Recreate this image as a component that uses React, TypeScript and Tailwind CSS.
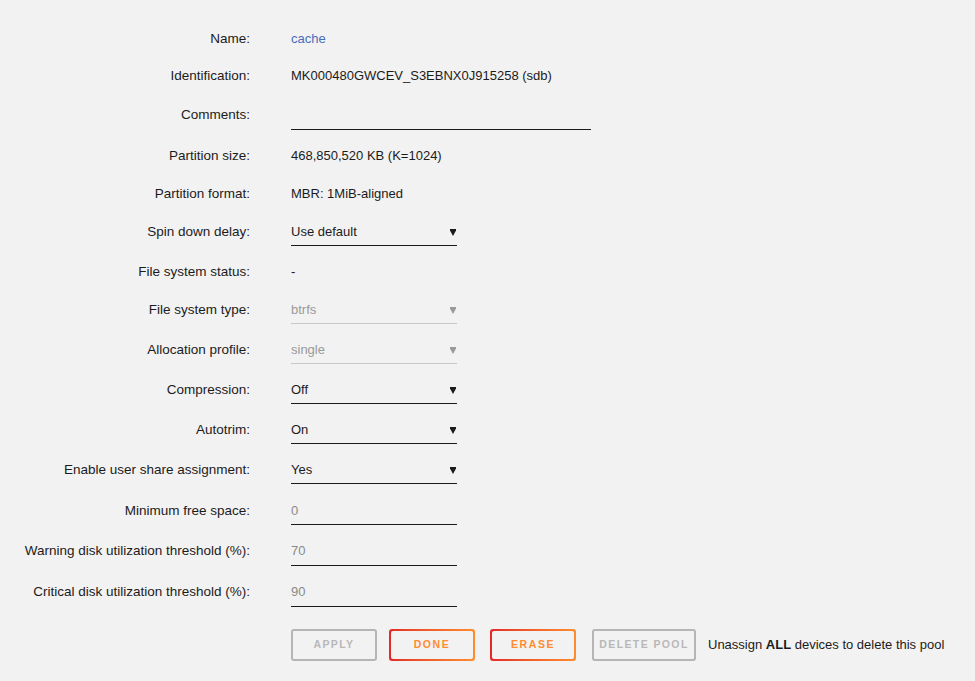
import React from "react";

const font = { fontFamily: '"Liberation Sans", Arial, sans-serif' };

function Arrow({ disabled }: { disabled?: boolean }) {
  return (
    <svg width="6" height="7" viewBox="0 0 6 7" className="absolute right-[1px] top-[11px]">
      <path d="M0 0 H6 V1.5 L3 7 L0 1.5 Z" fill={disabled ? "#9a9a9a" : "#1c1b1b"} />
    </svg>
  );
}

function Label({ children }: { children: React.ReactNode }) {
  return (
    <div className="w-[250px] shrink-0 text-right h-[26px] pt-[1px] leading-[26px] text-[13.5px] text-[#1c1b1b]">
      {children}
    </div>
  );
}

function Select({ value, disabled, h }: { value: string; disabled?: boolean; h: string }) {
  return (
    <div
      className={
        "relative w-[166px] border-b box-border pt-[1px] text-[13px] leading-[26px] " +
        h +
        (disabled ? " border-[#c8c8c8] text-[#9a9a9a]" : " border-[#1c1b1b] text-[#1c1b1b]")
      }
    >
      {value}
      <Arrow disabled={disabled} />
    </div>
  );
}

function Input({ value, w, h }: { value: string; w: string; h: string }) {
  return (
    <div className={"border-b border-[#1c1b1b] box-border pt-[1px] text-[13px] leading-[26px] text-[#8a8a8a] " + w + " " + h}>
      {value}
    </div>
  );
}

function Row({ h, label, children }: { h: string; label: string; children: React.ReactNode }) {
  return (
    <div className={"flex items-start " + h}>
      <Label>{label}</Label>
      <div className="ml-[41px]">{children}</div>
    </div>
  );
}

function Text({ children, className }: { children: React.ReactNode; className?: string }) {
  return <div className={"pt-[1px] text-[13px] leading-[26px] text-[#1c1b1b] " + (className || "")}>{children}</div>;
}

function GrayBtn({ label, w }: { label: string; w: string }) {
  return (
    <div
      className={
        "h-[32px] border-2 border-[#b5b5b5] rounded-[3px] flex items-center justify-center text-[10.5px] font-bold tracking-[1.4px] text-[#b8b8b8] " +
        w
      }
    >
      {label}
    </div>
  );
}

function OrangeBtn({ label }: { label: string }) {
  return (
    <div className="h-[32px] w-[86px] rounded-[3px] p-[2px] bg-gradient-to-r from-[#e22828] to-[#ff8c2f]">
      <div className="h-full w-full rounded-[2px] bg-[#f2f2f2] flex items-center justify-center text-[10.5px] font-bold tracking-[1.6px] text-[#ff8c2f]">
        {label}
      </div>
    </div>
  );
}

export default function App() {
  return (
    <div className="w-[975px] h-[681px] bg-[#f2f2f2] overflow-hidden" style={font}>
      <div className="pt-[25px] flex flex-col">
        <Row h="h-[37px]" label="Name:">
          <Text className="!text-[#486dba]">cache</Text>
        </Row>
        <Row h="h-[39px]" label="Identification:">
          <Text>MK000480GWCEV_S3EBNX0J915258 (sdb)</Text>
        </Row>
        <Row h="h-[41px]" label="Comments:">
          <Input value="" w="w-[300px]" h="h-[29px]" />
        </Row>
        <Row h="h-[38px]" label="Partition size:">
          <Text>468,850,520 KB (K=1024)</Text>
        </Row>
        <Row h="h-[38px]" label="Partition format:">
          <Text>MBR: 1MiB-aligned</Text>
        </Row>
        <Row h="h-[40px]" label="Spin down delay:">
          <Select value="Use default" h="h-[28px]" />
        </Row>
        <Row h="h-[38px]" label="File system status:">
          <Text>-</Text>
        </Row>
        <Row h="h-[40px]" label="File system type:">
          <Select value="btrfs" disabled h="h-[28px]" />
        </Row>
        <Row h="h-[40px]" label="Allocation profile:">
          <Select value="single" disabled h="h-[28px]" />
        </Row>
        <Row h="h-[40px]" label="Compression:">
          <Select value="Off" h="h-[28px]" />
        </Row>
        <Row h="h-[40px]" label="Autotrim:">
          <Select value="On" h="h-[28px]" />
        </Row>
        <Row h="h-[41px]" label="Enable user share assignment:">
          <Select value="Yes" h="h-[28px]" />
        </Row>
        <Row h="h-[40px]" label="Minimum free space:">
          <Input value="0" w="w-[166px]" h="h-[28px]" />
        </Row>
        <Row h="h-[41px]" label="Warning disk utilization threshold (%):">
          <Input value="70" w="w-[166px]" h="h-[29px]" />
        </Row>
        <Row h="h-[51px]" label="Critical disk utilization threshold (%):">
          <Input value="90" w="w-[166px]" h="h-[29px]" />
        </Row>
        <div className="flex items-center pl-[291px]">
          <GrayBtn label="APPLY" w="w-[86px]" />
          <div className="ml-[12px]">
            <OrangeBtn label="DONE" />
          </div>
          <div className="ml-[15px]">
            <OrangeBtn label="ERASE" />
          </div>
          <div className="ml-[16px]">
            <GrayBtn label="DELETE POOL" w="w-[104px]" />
          </div>
          <div className="ml-[12px] text-[13px] text-[#1c1b1b]">
            Unassign <b>ALL</b> devices to delete this pool
          </div>
        </div>
      </div>
    </div>
  );
}
